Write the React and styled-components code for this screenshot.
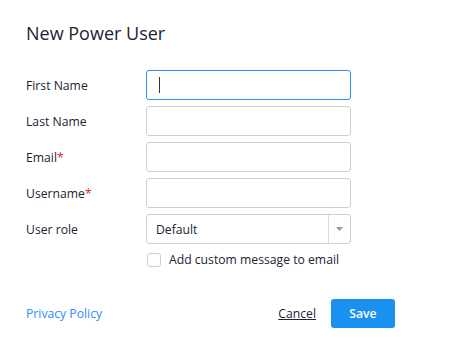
import React from "react";
import styled, { createGlobalStyle } from "styled-components";

const GlobalStyle = createGlobalStyle`
    html, body {
        margin: 0;
        padding: 0;
        background: #fff;
    }
    body {
        font-family: "Open Sans", "Liberation Sans", sans-serif;
        color: #232333;
    }
`

const Dialog = styled.div`
    width: 458px;
    height: 355px;
    box-sizing: border-box;
    padding: 20px 26px 0 26px;
`

const Title = styled.h2`
    margin: 0;
    font-size: 18px;
    font-weight: 400;
    line-height: 26px;
    color: #232333;
`

const Form = styled.div`
    margin-top: 24px;
    display: grid;
    grid-template-columns: 120px 205px;
    row-gap: 6px;
    align-items: center;
`

const Label = styled.label`
    font-size: 12.2px;
    color: #232333;
`

const Required = styled.span`
    color: #e02828;
`

const TextInput = styled.div`
    height: 30px;
    box-sizing: border-box;
    border: 1px solid ${p => (p.$focused ? "#2d8cff" : "#cfcfcf")};
    border-radius: 3px;
    position: relative;
`

const Caret = styled.span`
    position: absolute;
    left: 12px;
    top: 6px;
    width: 1px;
    height: 16px;
    background: #333;
`

const Select = styled.div`
    height: 30px;
    box-sizing: border-box;
    border: 1px solid #cfcfcf;
    border-radius: 3px;
    display: flex;
    align-items: center;
    font-size: 12.2px;
    color: #232333;
`

const SelectValue = styled.span`
    flex: 1;
    padding-left: 9px;
`

const SelectArrow = styled.span`
    width: 21px;
    height: 100%;
    border-left: 1px solid #dcdcdc;
    display: flex;
    align-items: center;
    justify-content: center;
`

const CheckRow = styled.div`
    grid-column: 2;
    display: flex;
    align-items: center;
    gap: 8px;
    font-size: 12.2px;
    color: #232333;
    margin-top: 1px;
`

const Box = styled.span`
    width: 14px;
    height: 14px;
    box-sizing: border-box;
    border: 1px solid #cfcfcf;
    border-radius: 3px;
    margin-left: 1px;
`

const Footer = styled.div`
    margin-top: 31px;
    display: flex;
    align-items: center;
    width: 369px;
`

const Link = styled.a`
    font-size: 12.2px;
    color: #2d8cff;
    text-decoration: none;
    flex: 1;
`

const Cancel = styled.a`
    font-size: 12.2px;
    color: #232333;
    text-decoration: underline;
    margin-right: 15px;
`

const SaveButton = styled.button`
    width: 64px;
    height: 29px;
    border: none;
    border-radius: 3px;
    background: #1a91f0;
    color: #fff;
    font-family: "Open Sans", sans-serif;
    font-weight: 600;
    font-size: 12.2px;
`

export default function App() {
    return (
        <>
            <GlobalStyle />
            <Dialog>
                <Title>New Power User</Title>
                <Form>
                    <Label>First Name</Label>
                    <TextInput $focused><Caret /></TextInput>

                    <Label>Last Name</Label>
                    <TextInput />

                    <Label>Email<Required>*</Required></Label>
                    <TextInput />

                    <Label>Username<Required>*</Required></Label>
                    <TextInput />

                    <Label>User role</Label>
                    <Select>
                        <SelectValue>Default</SelectValue>
                        <SelectArrow>
                            <svg width="7" height="4" viewBox="0 0 7 4">
                                <path d="M0 0 L7 0 L3.5 4 Z" fill="#999" />
                            </svg>
                        </SelectArrow>
                    </Select>

                    <CheckRow>
                        <Box />
                        Add custom message to email
                    </CheckRow>
                </Form>
                <Footer>
                    <Link>Privacy Policy</Link>
                    <Cancel>Cancel</Cancel>
                    <SaveButton>Save</SaveButton>
                </Footer>
            </Dialog>
        </>
    );
}
